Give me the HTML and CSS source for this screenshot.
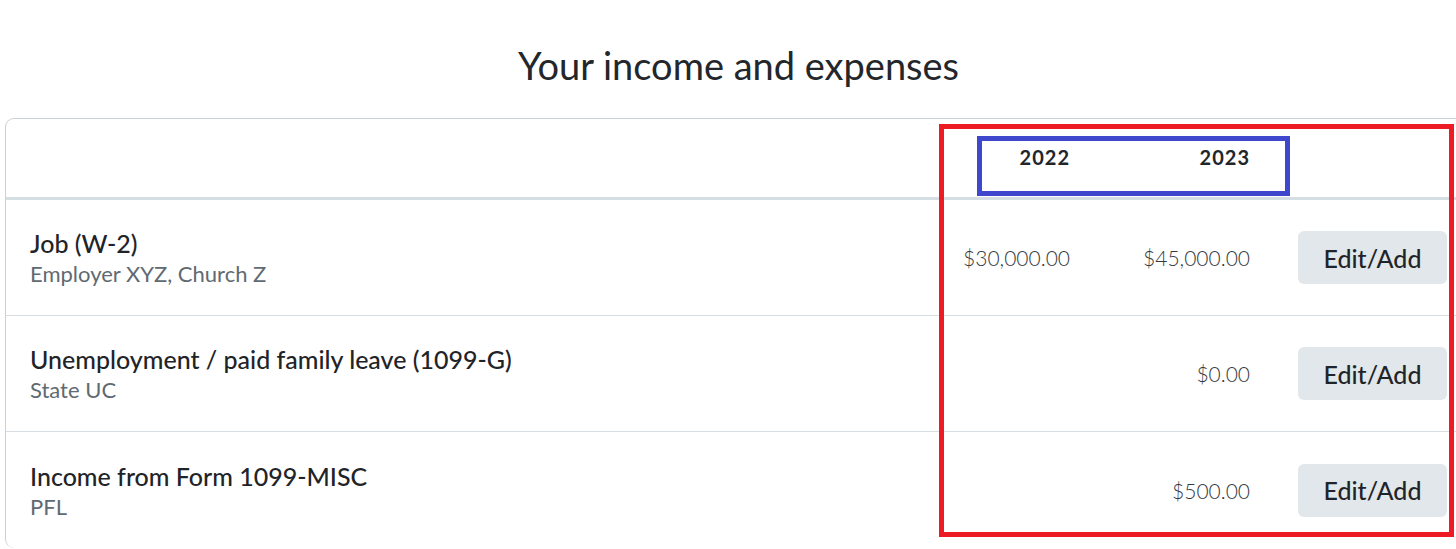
FILE: index.html
```html
<!DOCTYPE html>
<html lang="en">
<head>
<meta charset="utf-8">
<title>Your income and expenses</title>
<link rel="stylesheet" href="styles.css">
</head>
<body>
<div class="page">
  <div class="wrap">
    <h1 class="title">Your income and expenses</h1>
    <div class="card">
      <div class="row head">
        <div class="label"></div>
        <div class="year">2022</div>
        <div class="year">2023</div>
        <div class="action"></div>
      </div>
      <div class="row">
        <div class="label">
          <div class="name">Job (W-2)</div>
          <div class="sub">Employer XYZ, Church Z</div>
        </div>
        <div class="amount">$30,000.00</div>
        <div class="amount">$45,000.00</div>
        <div class="action"><button class="btn">Edit/Add</button></div>
      </div>
      <div class="row">
        <div class="label">
          <div class="name">Unemployment / paid family leave (1099-G)</div>
          <div class="sub">State UC</div>
        </div>
        <div class="amount"></div>
        <div class="amount">$0.00</div>
        <div class="action"><button class="btn">Edit/Add</button></div>
      </div>
      <div class="row last">
        <div class="label">
          <div class="name">Income from Form 1099-MISC</div>
          <div class="sub">PFL</div>
        </div>
        <div class="amount"></div>
        <div class="amount">$500.00</div>
        <div class="action"><button class="btn">Edit/Add</button></div>
      </div>
    </div>
  </div>
  <div class="mark mark-red"></div>
  <div class="mark mark-blue"></div>
</div>
</body>
</html>
```
FILE: styles.css
```css
* { box-sizing: border-box; }
html, body { margin: 0; padding: 0; background: #fff; }
body {
  font-family: "Lato", "Noto Sans", "Liberation Sans", sans-serif;
  color: #1f2428;
  overflow: hidden;
  width: 1456px;
  height: 549px;
}
.page { position: relative; width: 1456px; height: 549px; overflow: hidden; }
.wrap { margin-left: 5px; width: 1467px; }
.title {
  margin: 0;
  padding-top: 42px;
  height: 118px;
  text-align: center;
  font-size: 38px;
  font-weight: 400;
  line-height: 46px;
  color: #23272b;
}
.card {
  border: 1px solid #c9d2d8;
  border-radius: 9px;
  border-bottom: none;
}
.row {
  display: grid;
  grid-template-columns: 1fr 160px 180px 197px;
  align-items: center;
  padding: 0 24px;
  height: 116px;
  border-bottom: 1px solid #d6dee3;
}
.row.last { border-bottom: none; }
.row.head {
  height: 81px;
  border-bottom: 3px solid #d5dee2;
}
.year {
  text-align: right;
  font-size: 20px;
  font-weight: 700;
  letter-spacing: 1px;
  color: #22262a;
  padding-bottom: 2px;
}
.name {
  font-size: 25px;
  font-weight: 500;
  line-height: 30px;
  color: #1f2428;
}
.sub {
  margin-top: 3px;
  font-size: 22px;
  line-height: 26px;
  color: #5f6a72;
}
.amount {
  text-align: right;
  font-size: 21px;
  font-weight: 300;
  color: #35393d;
}
.action { display: flex; justify-content: flex-end; }
.btn {
  width: 149px;
  height: 53px;
  border: none;
  border-radius: 6px;
  background: #e1e7ea;
  font-family: inherit;
  font-size: 25px;
  font-weight: 500;
  color: #1f2428;
  padding: 0;
}
.mark { position: absolute; }
.mark-red {
  left: 939px; top: 124px; width: 515px; height: 413px;
  border: 5px solid #ed1c24;
}
.mark-blue {
  left: 977px; top: 136px; width: 313px; height: 60px;
  border: 5px solid #3f48cc;
}
```
